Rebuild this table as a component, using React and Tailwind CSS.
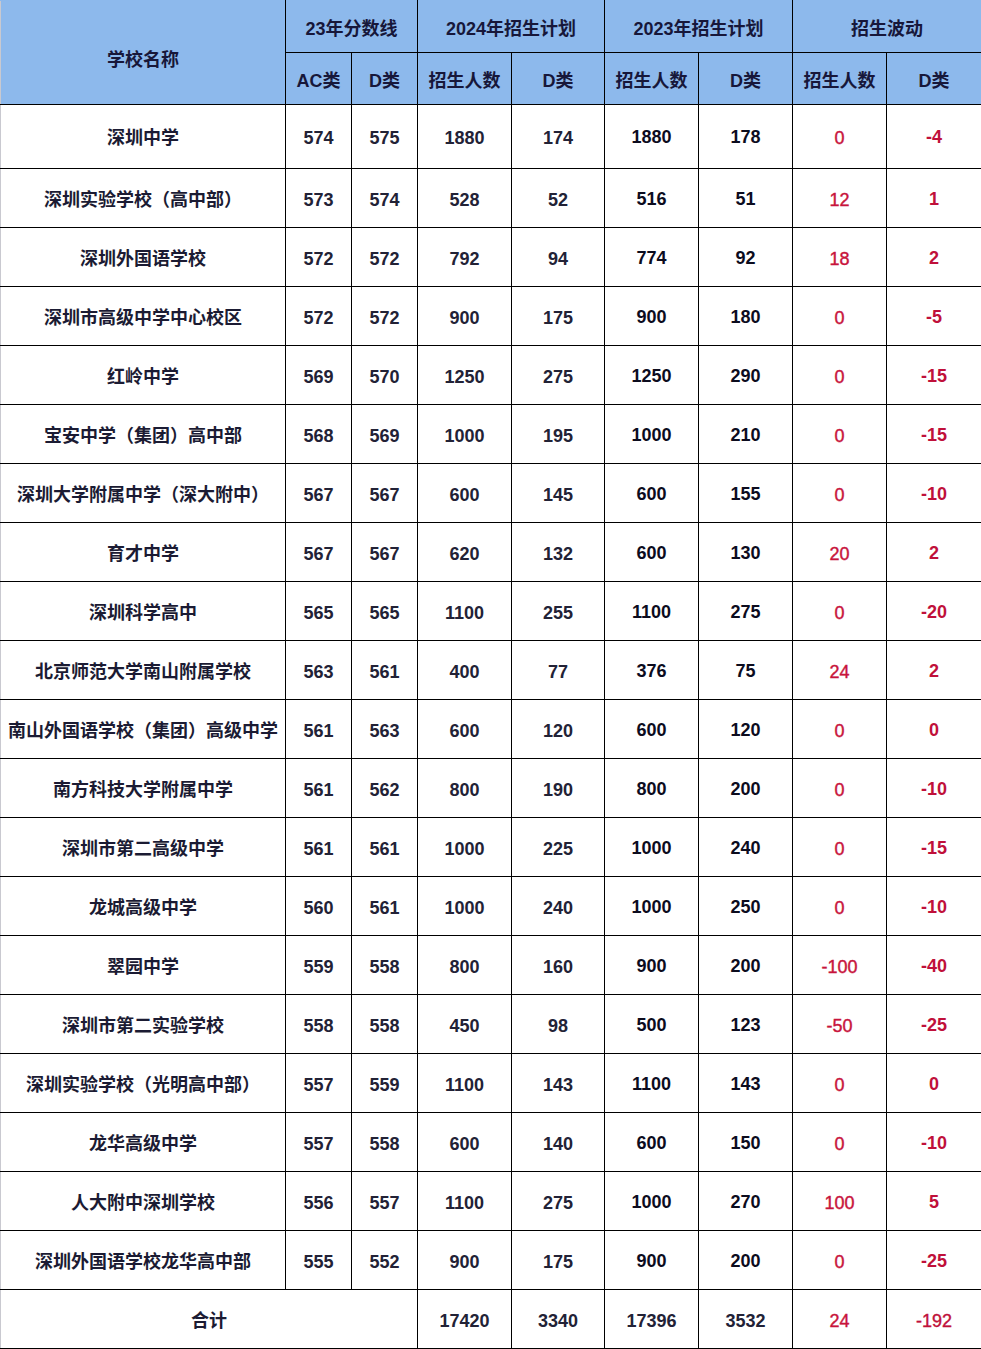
import React from "react";

const rows = [
  ["深圳中学", 574, 575, 1880, 174, 1880, 178, 0, -4],
  ["深圳实验学校（高中部）", 573, 574, 528, 52, 516, 51, 12, 1],
  ["深圳外国语学校", 572, 572, 792, 94, 774, 92, 18, 2],
  ["深圳市高级中学中心校区", 572, 572, 900, 175, 900, 180, 0, -5],
  ["红岭中学", 569, 570, 1250, 275, 1250, 290, 0, -15],
  ["宝安中学（集团）高中部", 568, 569, 1000, 195, 1000, 210, 0, -15],
  ["深圳大学附属中学（深大附中）", 567, 567, 600, 145, 600, 155, 0, -10],
  ["育才中学", 567, 567, 620, 132, 600, 130, 20, 2],
  ["深圳科学高中", 565, 565, 1100, 255, 1100, 275, 0, -20],
  ["北京师范大学南山附属学校", 563, 561, 400, 77, 376, 75, 24, 2],
  ["南山外国语学校（集团）高级中学", 561, 563, 600, 120, 600, 120, 0, 0],
  ["南方科技大学附属中学", 561, 562, 800, 190, 800, 200, 0, -10],
  ["深圳市第二高级中学", 561, 561, 1000, 225, 1000, 240, 0, -15],
  ["龙城高级中学", 560, 561, 1000, 240, 1000, 250, 0, -10],
  ["翠园中学", 559, 558, 800, 160, 900, 200, -100, -40],
  ["深圳市第二实验学校", 558, 558, 450, 98, 500, 123, -50, -25],
  ["深圳实验学校（光明高中部）", 557, 559, 1100, 143, 1100, 143, 0, 0],
  ["龙华高级中学", 557, 558, 600, 140, 600, 150, 0, -10],
  ["人大附中深圳学校", 556, 557, 1100, 275, 1000, 270, 100, 5],
  ["深圳外国语学校龙华高中部", 555, 552, 900, 175, 900, 200, 0, -25],
];

const font = { fontFamily: '"Liberation Sans", "Noto Sans CJK SC", sans-serif' };

export default function App() {
  return (
    <div className="w-[981px] bg-white" style={font}>
      <table className="w-[981px] table-fixed border-collapse text-center text-[18px] text-[#15152e]">
        <colgroup>
          <col className="w-[285px]" />
          <col className="w-[66px]" />
          <col className="w-[66px]" />
          <col className="w-[94px]" />
          <col className="w-[93px]" />
          <col className="w-[94px]" />
          <col className="w-[94px]" />
          <col className="w-[94px]" />
          <col className="w-[95px]" />
        </colgroup>
        <thead>
          <tr className="h-[52px] bg-[#8db9ec] text-[18px] text-[#17173a]">
            <th rowSpan={2} className="border border-black border-l-[#c9c9d0] border-t-[#8db9ec] pt-[16px] font-bold">学校名称</th>
            <th colSpan={2} className="border border-black border-t-[#8db9ec] pt-[5px] font-bold">23年分数线</th>
            <th colSpan={2} className="border border-black border-t-[#8db9ec] pt-[5px] font-bold">2024年招生计划</th>
            <th colSpan={2} className="border border-black border-t-[#8db9ec] pt-[5px] font-bold">2023年招生计划</th>
            <th colSpan={2} className="border border-black border-t-[#8db9ec] border-r-[#c9c9d0] pt-[5px] font-bold">招生波动</th>
          </tr>
          <tr className="h-[52px] bg-[#8db9ec] text-[18px] text-[#17173a]">
            <th className="border border-black pt-[5px] font-bold">AC类</th>
            <th className="border border-black pt-[5px] font-bold">D类</th>
            <th className="border border-black pt-[5px] font-bold">招生人数</th>
            <th className="border border-black pt-[5px] font-bold">D类</th>
            <th className="border border-black pt-[5px] font-bold">招生人数</th>
            <th className="border border-black pt-[5px] font-bold">D类</th>
            <th className="border border-black pt-[5px] font-bold">招生人数</th>
            <th className="border border-black border-r-[#c9c9d0] pt-[5px] font-bold">D类</th>
          </tr>
        </thead>
        <tbody>
          {rows.map((r, i) => (
            <tr key={i} className={i === 0 ? "h-[64px]" : "h-[59px]"}>
              <td className="border border-black border-l-[#c9c9d0] pt-[4px] font-bold text-[#1b1b33]">{r[0]}</td>
              <td className="border border-black pt-[4px] font-bold text-[#222236]">{r[1]}</td>
              <td className="border border-black pt-[4px] font-bold text-[#222236]">{r[2]}</td>
              <td className="border border-black pt-[4px] font-bold text-[#222236]">{r[3]}</td>
              <td className="border border-black pt-[4px] font-bold text-[#222236]">{r[4]}</td>
              <td className="border border-black pt-[2px] font-bold text-[#0c0c1e]">{r[5]}</td>
              <td className="border border-black pt-[2px] font-bold text-[#0c0c1e]">{r[6]}</td>
              <td className="border border-black pt-[4px] font-medium text-[#c8143c] [-webkit-text-stroke:0.4px_#c8143c]">{r[7]}</td>
              <td className="border border-black border-r-[#c9c9d0] pt-[2px] font-bold text-[#c0103a]">{r[8]}</td>
            </tr>
          ))}
          <tr className="h-[59px]">
            <td colSpan={3} className="border border-black border-l-[#c9c9d0] pt-[4px] font-bold text-[#1b1b33]">合计</td>
            <td className="border border-black pt-[4px] font-bold text-[#222236]">17420</td>
            <td className="border border-black pt-[4px] font-bold text-[#222236]">3340</td>
            <td className="border border-black pt-[4px] font-bold text-[#222236]">17396</td>
            <td className="border border-black pt-[4px] font-bold text-[#222236]">3532</td>
            <td className="border border-black pt-[4px] font-medium text-[#c8143c] [-webkit-text-stroke:0.4px_#c8143c]">24</td>
            <td className="border border-black border-r-[#c9c9d0] pt-[4px] font-medium text-[#c0103a] [-webkit-text-stroke:0.4px_#c0103a]">-192</td>
          </tr>
        </tbody>
      </table>
    </div>
  );
}
